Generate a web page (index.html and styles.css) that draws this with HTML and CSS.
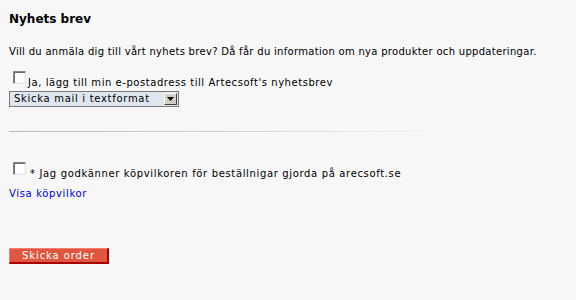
FILE: index.html
```html
<!DOCTYPE html>
<html lang="sv">
<head>
<meta charset="utf-8">
<title>Nyhets brev</title>
<link rel="stylesheet" href="styles.css">
</head>
<body>
<div class="page">
  <h1 class="title">Nyhets brev</h1>
  <p class="intro">Vill du anmäla dig till vårt nyhets brev? Då får du information om nya produkter och uppdateringar.</p>
  <div class="check-row"><input type="checkbox" class="cb"><span>Ja, lägg till min e-postadress till Artecsoft's nyhetsbrev</span></div>
  <div class="select">
    <span class="select-text">Skicka mail i textformat</span>
    <span class="select-btn"><svg width="7" height="4" viewBox="0 0 7 4"><path d="M0 0h7L3.5 4z" fill="#000"/></svg></span>
  </div>
  <div class="rule"></div>
  <div class="check-row terms"><input type="checkbox" class="cb"><span>* Jag godkänner köpvilkoren för beställnigar gjorda på arecsoft.se</span></div>
  <a class="link" href="#">Visa köpvilkor</a>
  <button class="submit" type="button">Skicka order</button>
</div>
</body>
</html>
```
FILE: styles.css
```css
html, body {
  margin: 0;
  padding: 0;
  background: #f7f7f7;
}
body {
  font-family: "DejaVu Sans", Verdana, sans-serif;
  font-size: 10px;
  color: #000;
}
.page {
  padding: 11px 0 0 9px;
}
.title {
  margin: 0;
  font-size: 12px;
  font-weight: bold;
  line-height: 16px;
}
.intro {
  margin: 18px 0 0;
  line-height: 14px;
  letter-spacing: 0.3px;
}
.check-row {
  margin-top: 12px;
  line-height: 14px;
  letter-spacing: 0.55px;
}
.cb {
  appearance: none;
  -webkit-appearance: none;
  display: inline-block;
  vertical-align: baseline;
  width: 13px;
  height: 13px;
  margin: 0 2px 2px 4px;
  box-sizing: border-box;
  background: #fff;
  border-style: solid;
  border-width: 1px;
  border-color: #858585 #e8e8e8 #e8e8e8 #858585;
  box-shadow: inset 1px 1px 0 #6e6e6e, inset -1px -1px 0 #f4f4f4;
}
.select {
  display: flex;
  width: 170px;
  height: 16px;
  margin-top: 1px;
  box-sizing: border-box;
  border: 1px solid #7a7a7a;
  background: #dfe6f0;
  padding: 1px;
}
.select-text {
  flex: 1;
  padding-left: 3px;
  line-height: 12px;
  font-size: 10px;
  letter-spacing: 0.7px;
}
.select-btn {
  width: 13px;
  height: 12px;
  box-sizing: border-box;
  background: #d4d0c8;
  border-style: solid;
  border-width: 1px;
  border-color: #fff #404040 #404040 #fff;
  display: flex;
  align-items: center;
  justify-content: center;
}
.rule {
  width: 416px;
  height: 1px;
  margin-top: 24px;
  background: linear-gradient(to right, #b8b8b8, #d0d0d0 50%, #efefef);
  border-bottom: 1px solid #fbfbfb;
}
.terms {
  margin-top: 29px;
  letter-spacing: 0.65px;
}
.terms .cb {
  margin-right: 4px;
}
.link {
  display: block;
  margin-top: 6px;
  line-height: 14px;
  color: #0000ff;
  text-decoration: none;
  letter-spacing: 0.65px;
  width: max-content;
}
.submit {
  display: block;
  margin-top: 47px;
  width: 100px;
  height: 16px;
  padding: 0;
  box-sizing: border-box;
  background: #e05640;
  border-style: solid;
  border-width: 1px 2px 2px 1px;
  border-color: #f77b6f #a80000 #a80000 #f77b6f;
  color: #fff;
  font-family: "DejaVu Sans", Verdana, sans-serif;
  font-size: 10px;
  letter-spacing: 0.9px;
  line-height: 12px;
}
```
